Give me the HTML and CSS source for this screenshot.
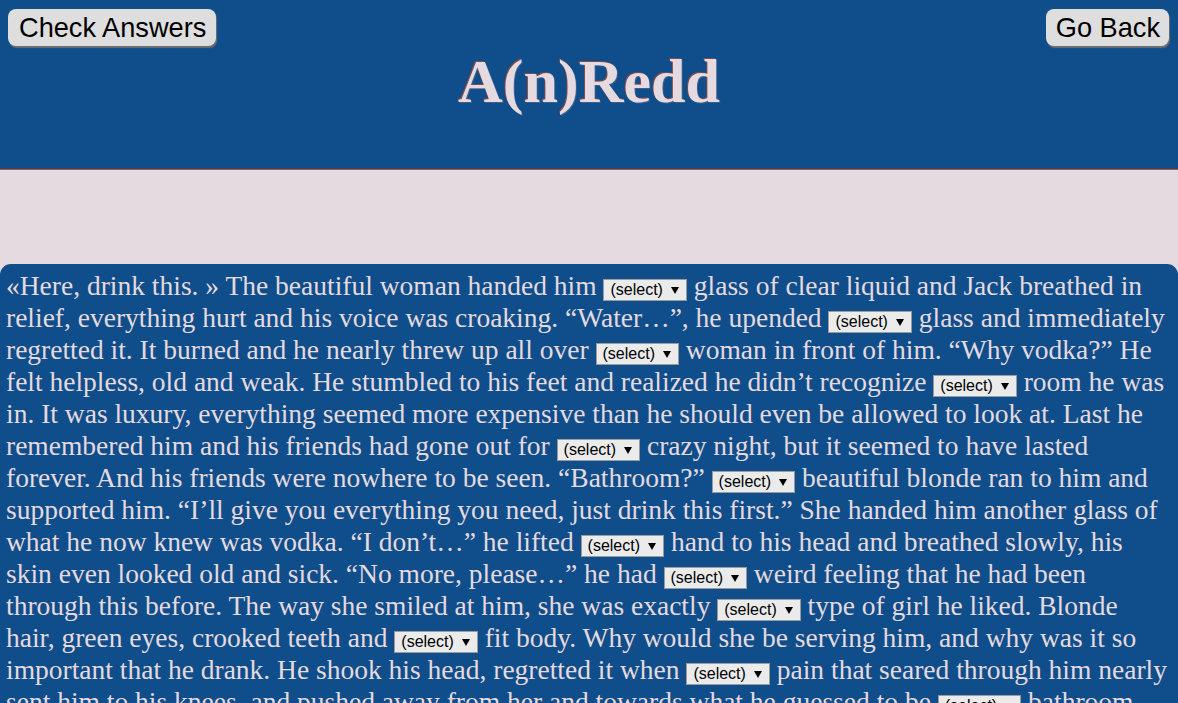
FILE: index.html
```html
<!DOCTYPE html>
<html lang="en">
<head>
<meta charset="utf-8">
<title>A(n)Redd</title>
<link rel="stylesheet" href="styles.css">
</head>
<body>
<header class="top">
  <div class="toolbar">
    <button class="btn">Check Answers</button>
    <button class="btn btn-back">Go Back</button>
  </div>
  <h1 class="title">A(n)Redd</h1>
</header>
<main class="story">
  <p class="text">«Here, drink this. » The beautiful woman handed him <span class="blank">(select)<span class="arrow"></span></span> glass of clear liquid and Jack breathed in relief, everything hurt and his voice was croaking. “Water…”, he upended <span class="blank">(select)<span class="arrow"></span></span> glass and immediately regretted it. It burned and he nearly threw up all over <span class="blank">(select)<span class="arrow"></span></span> woman in front of him. “Why vodka?” He felt helpless, old and weak. He stumbled to his feet and realized he didn’t recognize <span class="blank">(select)<span class="arrow"></span></span> room he was in. It was luxury, everything seemed more expensive than he should even be allowed to look at. Last he remembered him and his friends had gone out for <span class="blank">(select)<span class="arrow"></span></span> crazy night, but it seemed to have lasted forever. And his friends were nowhere to be seen. “Bathroom?” <span class="blank">(select)<span class="arrow"></span></span> beautiful blonde ran to him and supported him. “I’ll give you everything you need, just drink this first.” She handed him another glass of what he now knew was vodka. “I don’t…” he lifted <span class="blank">(select)<span class="arrow"></span></span> hand to his head and breathed slowly, his skin even looked old and sick. “No more, please…” he had <span class="blank">(select)<span class="arrow"></span></span> weird feeling that he had been through this before. The way she smiled at him, she was exactly <span class="blank">(select)<span class="arrow"></span></span> type of girl he liked. Blonde hair, green eyes, crooked teeth and <span class="blank">(select)<span class="arrow"></span></span> fit body. Why would she be serving him, and why was it so important that he drank. He shook his head, regretted it when <span class="blank">(select)<span class="arrow"></span></span> pain that seared through him nearly sent him to his knees, and pushed away from her and towards what he guessed to be <span class="blank">(select)<span class="arrow"></span></span> bathroom. He locked the door behind him and looked into <span class="blank">(select)<span class="arrow"></span></span> mirror.</p>
</main>
</body>
</html>
```
FILE: styles.css
```css
html, body {
  margin: 0;
  padding: 0;
}
body {
  background: #e4dadf;
  font-family: "Liberation Serif", "Times New Roman", serif;
}
.top {
  background: #104e8b;
  height: 169px;
  border-bottom: 1px solid #c0502a;
  box-sizing: content-box;
}
.toolbar {
  display: flex;
  justify-content: space-between;
  padding: 9px 9px 0 8px;
}
.btn {
  font-family: "Liberation Sans", Arial, sans-serif;
  font-size: 27.2px;
  line-height: 31px;
  color: #000;
  background: #dedede;
  border: none;
  border-radius: 8px;
  padding: 3px 10px 3px 11px;
  box-shadow: 1px 2px 1px #6f6f6f;
  cursor: pointer;
}
.btn-back {
  padding: 3px 9px 3px 10px;
}
.title {
  margin: 0;
  text-align: center;
  font-size: 62px;
  font-weight: bold;
  color: #e4dadf;
  text-shadow: -1px -1px 0 rgba(214, 70, 30, 0.6), 1px 1px 0 rgba(90, 110, 150, 0.6);
}
.story {
  margin-top: 94px;
  background: #104e8b;
  border-radius: 11px 11px 0 0;
  padding: 6px 6px 20px;
}
.text {
  margin: 0;
  font-size: 27.5px;
  line-height: 32px;
  color: #e4dadf;
}
.blank {
  display: inline-block;
  font-family: "Liberation Sans", Arial, sans-serif;
  font-size: 16px;
  line-height: 18px;
  color: #000;
  background: #ebebeb;
  border: 1px solid #9a9a9a;
  padding: 1px 7px 1px 6px;
  white-space: nowrap;
  vertical-align: baseline;
}
.arrow {
  display: inline-block;
  width: 0;
  height: 0;
  margin-left: 8px;
  border-left: 4px solid transparent;
  border-right: 4px solid transparent;
  border-top: 7px solid #000;
  vertical-align: 1px;
}
```
